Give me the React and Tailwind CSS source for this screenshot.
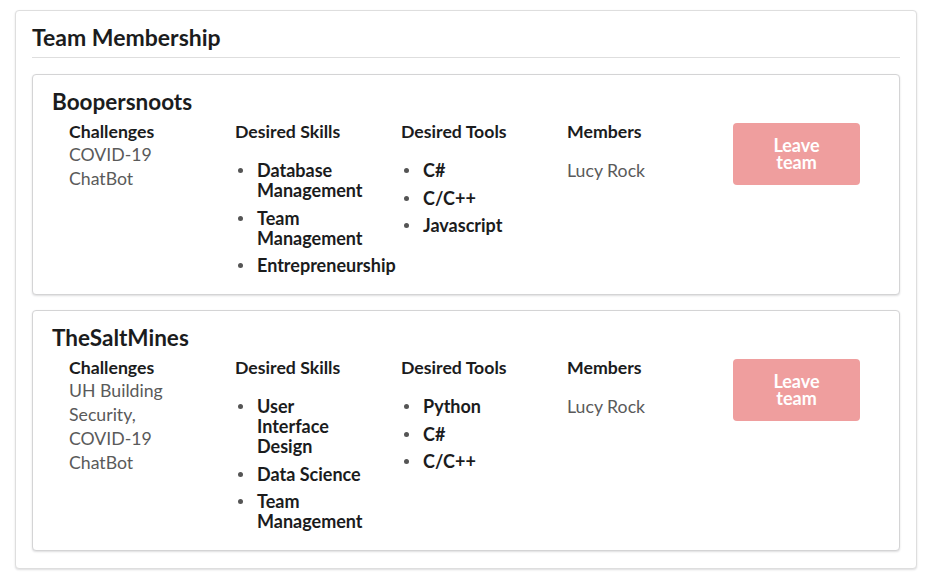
const teams = [
  {
    name: "Boopersnoots",
    challenges: "COVID-19 ChatBot",
    skills: ["Database Management", "Team Management", "Entrepreneurship"],
    tools: ["C#", "C/C++", "Javascript"],
    members: ["Lucy Rock"],
  },
  {
    name: "TheSaltMines",
    challenges: "UH Building Security, COVID-19 ChatBot",
    skills: ["User Interface Design", "Data Science", "Team Management"],
    tools: ["Python", "C#", "C/C++"],
    members: ["Lucy Rock"],
  },
];

function BulletList({ items }) {
  return (
    <ul className="mt-[17px] flex flex-col gap-[7.5px]">
      {items.map((item) => (
        <li key={item} className="flex items-start">
          <span className="mt-[8px] ml-[3px] w-[5px] h-[5px] rounded-full bg-[#555555] shrink-0"></span>
          <span className="ml-[14px] w-[112px] text-[18px] leading-[20px] font-bold text-[#1b1c1d]">{item}</span>
        </li>
      ))}
    </ul>
  );
}

function TeamCard({ team }) {
  return (
    <div className="bg-white border border-[#d4d4d5] rounded shadow-[0_1px_2px_0_rgba(34,36,38,0.15)] px-[19px] pt-[13px] pb-[19px]">
      <h3 className="text-[22.5px] leading-[28px] font-bold text-[#1b1c1d]">{team.name}</h3>
      <div className="mt-[5px] ml-[17px] grid grid-cols-[138px_138px_138px_138px_127px] gap-x-[28px] items-start">
        {/* CHALLENGES */}
        <div>
          <h4 className="text-[17.7px] leading-[22px] font-bold text-[#1b1c1d]">Challenges</h4>
          <p className="w-[120px] text-[17.7px] leading-[24px] text-[#5a5a5a]">{team.challenges}</p>
        </div>

        {/* SKILLS */}
        <div>
          <h4 className="text-[17.7px] leading-[22px] font-bold text-[#1b1c1d]">Desired Skills</h4>
          <BulletList items={team.skills} />
        </div>

        {/* TOOLS */}
        <div>
          <h4 className="text-[17.7px] leading-[22px] font-bold text-[#1b1c1d]">Desired Tools</h4>
          <BulletList items={team.tools} />
        </div>

        {/* MEMBERS */}
        <div>
          <h4 className="text-[17.7px] leading-[22px] font-bold text-[#1b1c1d]">Members</h4>
          <div className="mt-[18px] flex flex-col gap-[7.5px]">
            {team.members.map((m) => (
              <p key={m} className="text-[17.7px] leading-[20px] text-[#5a5a5a]">{m}</p>
            ))}
          </div>
        </div>

        {/* BUTTON */}
        <button className="mt-[2px] h-[62px] w-[127px] rounded bg-[#ef9e9e] text-white font-bold text-[18px] leading-[17px] px-10 cursor-default">
          Leave team
        </button>
      </div>
    </div>
  );
}

export default function App() {
  return (
    <div className="bg-white min-h-screen pt-[10px] pl-[15px] font-['Lato','Liberation_Sans',sans-serif]">
      <div className="w-[902px] bg-white border border-[#dedede] rounded shadow-[0_1px_2px_0_rgba(34,36,38,0.15)] px-4 pt-[10px] pb-[17px]">
        <h2 className="text-[23px] leading-[32px] font-bold text-[#1b1c1d] pb-[4px] border-b border-[#dedede]">
          Team Membership
        </h2>
        <div className="mt-4 flex flex-col gap-[15px]">
          {teams.map((t) => (
            <TeamCard key={t.name} team={t} />
          ))}
        </div>
      </div>
    </div>
  );
}
